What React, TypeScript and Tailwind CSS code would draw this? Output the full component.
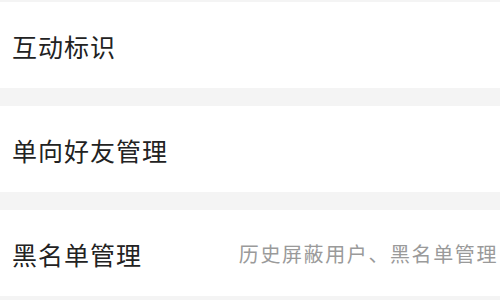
export default function App() {
  const rows = [
    { label: "互动标识", hint: "" },
    { label: "单向好友管理", hint: "" },
    { label: "黑名单管理", hint: "历史屏蔽用户、黑名单管理" },
  ];

  return (
    <div
      className="flex h-[300px] w-[500px] flex-col gap-[18px] overflow-hidden bg-[#f4f4f4] pt-[2px]"
      style={{ fontFamily: '"Noto Sans CJK SC", "Noto Sans", sans-serif' }}
    >
      {rows.map((row) => (
        <div
          key={row.label}
          className="flex h-[86px] shrink-0 items-center justify-between bg-white pl-3 pr-[2px]"
        >
          <span className="pt-[3px] text-[25px] leading-none tracking-[1px] text-[#222]">
            {row.label}
          </span>
          {row.hint && (
            <span className="pt-[2px] text-[20px] leading-none tracking-[1.6px] text-[#9a9a9a]">
              {row.hint}
            </span>
          )}
        </div>
      ))}
    </div>
  );
}
